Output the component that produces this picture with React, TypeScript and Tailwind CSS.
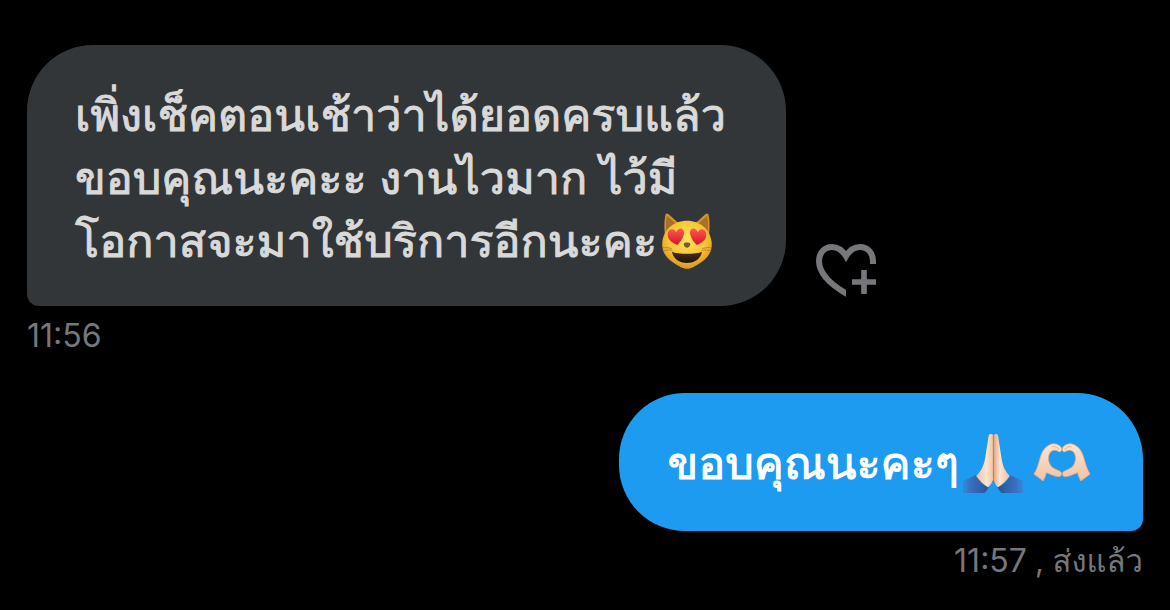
import type { ReactNode } from "react";

function HeartEyesCat() {
  return (
    <svg viewBox="0 0 156 168" className="ml-[4px] h-[56px] w-[52px] shrink-0" role="img" aria-label="Smiling cat with heart eyes">
      <defs>
        <radialGradient id="catFace" cx="50%" cy="38%" r="62%">
          <stop offset="0" stopColor="#ffe45c" />
          <stop offset="0.6" stopColor="#f6c636" />
          <stop offset="1" stopColor="#d9961d" />
        </radialGradient>
        <linearGradient id="catHeart" x1="0" y1="0" x2="0" y2="1">
          <stop offset="0" stopColor="#ff5a50" />
          <stop offset="1" stopColor="#d91224" />
        </linearGradient>
        <linearGradient id="catMouth" x1="0" y1="0" x2="0" y2="1">
          <stop offset="0" stopColor="#4a2d16" />
          <stop offset="1" stopColor="#1f140e" />
        </linearGradient>
      </defs>
      <path d="M12 66C9 40 10 18 14 4C16 0 20 1 23 4L56 34ZM144 66C147 40 146 18 142 4C140 0 136 1 133 4L100 34Z" fill="#cf932c" />
      <path d="M16 56C14 34 15 20 18 9L48 35ZM140 56C142 34 141 20 138 9L108 35Z" fill="#a8702b" />
      <path d="M78 23C37 23 8 50 4 87C1 113 14 136 42 152C54 159 64 167 78 167C92 167 102 159 114 152C142 136 155 113 152 87C148 50 119 23 78 23Z" fill="url(#catFace)" />
      <path d="M3 104Q18 102 33 107M5 114Q20 109 34 112M153 104Q138 102 123 107M151 114Q136 109 122 112" fill="none" stroke="#ad7722" strokeWidth="2" />
      <path d="M49 96C34 90 20 80 20 65C20 55 27 48 34 49C40 49 43 53 45 58C49 50 55 45 62 47C69 50 71 58 68 66C65 78 57 88 49 96Z" fill="url(#catHeart)" />
      <path d="M107 96C122 90 136 80 136 65C136 55 129 48 122 49C116 49 113 53 111 58C107 50 101 45 94 47C87 50 85 58 88 66C91 78 99 88 107 96Z" fill="url(#catHeart)" />
      <path d="M68 93C68 87 88 87 88 93C88 100 82 104 78 104C74 104 68 100 68 93Z" fill="#765a35" />
      <path d="M33 116C51 124 105 124 123 116C120 138 99 150 78 150C57 150 36 138 33 116Z" fill="url(#catMouth)" />
    </svg>
  );
}

function FoldedHands() {
  return (
    <svg viewBox="0 0 180 180" className="h-[60px] w-[60px] shrink-0" role="img" aria-label="Folded hands">
      <defs>
        <linearGradient id="palmLeft" x1="0" y1="0" x2="1" y2="0">
          <stop offset="0" stopColor="#eebf9d" />
          <stop offset="0.6" stopColor="#fde4cf" />
          <stop offset="1" stopColor="#efc3a3" />
        </linearGradient>
        <linearGradient id="palmRight" x1="1" y1="0" x2="0" y2="0">
          <stop offset="0" stopColor="#eebf9d" />
          <stop offset="0.6" stopColor="#fde4cf" />
          <stop offset="1" stopColor="#e0a27d" />
        </linearGradient>
        <linearGradient id="sleeve" x1="0" y1="0" x2="1" y2="0">
          <stop offset="0" stopColor="#3e78c8" stopOpacity="0.5" />
          <stop offset="0.12" stopColor="#3a70c0" />
          <stop offset="0.4" stopColor="#2a5699" />
          <stop offset="0.6" stopColor="#2a5699" />
          <stop offset="0.88" stopColor="#3a70c0" />
          <stop offset="1" stopColor="#3e78c8" stopOpacity="0.5" />
        </linearGradient>
      </defs>
      <path d="M0 145L38 126C46 143 60 157 77 162C75 168 71 174 64 180H0ZM180 145L142 126C134 143 120 157 103 162C105 168 109 174 116 180H180Z" fill="url(#sleeve)" />
      <path d="M77 8C78 1 89 1 91 8V132C91 145 84 155 75 163C63 155 49 143 40 129C57 111 64 93 67 72Z" fill="url(#palmLeft)" />
      <path d="M105 8C104 1 93 1 91 8V132C91 145 97 155 105 163C117 155 131 143 140 129C123 111 118 93 115 72Z" fill="url(#palmRight)" />
      <path d="M91 8V136" fill="none" stroke="#b57a5a" strokeWidth="2.5" />
    </svg>
  );
}

function HeartHands() {
  return (
    <svg viewBox="0 0 174 118" className="h-[39px] w-[58px] shrink-0" role="img" aria-label="Heart hands">
      <defs>
        <linearGradient id="heartSkin" x1="0" y1="0" x2="0" y2="1">
          <stop offset="0" stopColor="#fde4cf" />
          <stop offset="1" stopColor="#f3c3a2" />
        </linearGradient>
      </defs>
      <g fill="url(#heartSkin)" stroke="#dfa582" strokeWidth="2.5" strokeLinejoin="round">
        <path d="M2 94C12 80 15 64 20 48C26 24 38 8 56 3C70 0 82 8 86 16C88 24 82 29 76 26C68 20 55 21 50 31C43 44 46 60 55 71C63 80 78 82 84 88C88 95 85 102 77 102C62 101 50 93 40 90C38 98 34 108 30 115Z" />
        <path d="M172 94C162 80 159 64 154 48C148 24 136 8 118 3C104 0 92 8 88 16C86 24 92 29 98 26C106 20 119 21 124 31C131 44 128 60 119 71C111 80 96 82 90 88C86 95 89 102 97 102C112 101 124 93 134 90C136 98 140 108 144 115Z" />
      </g>
      <path d="M58 11C66 9 74 13 79 20M116 11C108 9 100 13 95 20" fill="none" stroke="#dfa582" strokeWidth="2.5" />
    </svg>
  );
}

function HeartPlusIcon() {
  return (
    <svg viewBox="0 0 180 159" className="h-[53px] w-[60px]" fill="none" aria-hidden="true">
      <clipPath id="heartCut">
        <path d="M0 0H180V110H90V159H0Z" />
      </clipPath>
      <path d="M108 158C45 125 9 88 9 51C9 27 25 9 48 9C64 9 79 18 90 37C101 18 116 9 132 9C155 9 171 27 171 51V60" stroke="currentColor" strokeWidth="18" clipPath="url(#heartCut)" />
      <path d="M144 78V150M108 114H180" stroke="currentColor" strokeWidth="17" />
    </svg>
  );
}

function Line({ children }: { children: ReactNode }) {
  return <span className="flex h-[63px] items-center whitespace-nowrap">{children}</span>;
}

export default function App() {
  return (
    <main className="flex min-h-screen flex-col gap-[33px] bg-black px-[27px] pt-[45px] pb-6 font-['Inter','Loma',sans-serif]">
      <article className="flex flex-col items-start gap-[6px]">
        <div className="flex w-full items-end gap-[30px]">
          <p className="w-[68%] rounded-[66px] rounded-bl-[12px] bg-[#333639] px-[48px] pt-[38px] pb-[34px] text-[45px] leading-[63px] text-[#d9d9d9] [-webkit-text-stroke:1px_currentColor]">
            <Line>เพิ่งเช็คตอนเช้าว่าได้ยอดครบแล้ว</Line>
            <Line>ขอบคุณนะคะะ งานไวมาก ไว้มี</Line>
            <Line>
              โอกาสจะมาใช้บริการอีกนะคะ
              <HeartEyesCat />
            </Line>
          </p>
          <button type="button" aria-label="Add reaction" className="pb-[9px] text-[#75777b]">
            <HeartPlusIcon />
          </button>
        </div>
        <time className="text-[32px] leading-[48px] text-[#75777b]">11:56</time>
      </article>

      <article className="flex flex-col items-end gap-[6px]">
        <p className="rounded-[66px] rounded-br-[12px] bg-[#1d9bf0] px-[48px] pt-[38px] pb-[37px] text-[45px] leading-[63px] text-white [-webkit-text-stroke:1px_currentColor]">
          <Line>
            ขอบคุณนะคะๆ
            <span className="flex items-center gap-[10px] px-[4px]">
              <FoldedHands />
              <HeartHands />
            </span>
          </Line>
        </p>
        <p className="flex items-baseline gap-[8px] text-[32px] leading-[48px] text-[#75777b]">
          <time>11:57</time>
          <span className="text-[31px]">, ส่งแล้ว</span>
        </p>
      </article>
    </main>
  );
}
